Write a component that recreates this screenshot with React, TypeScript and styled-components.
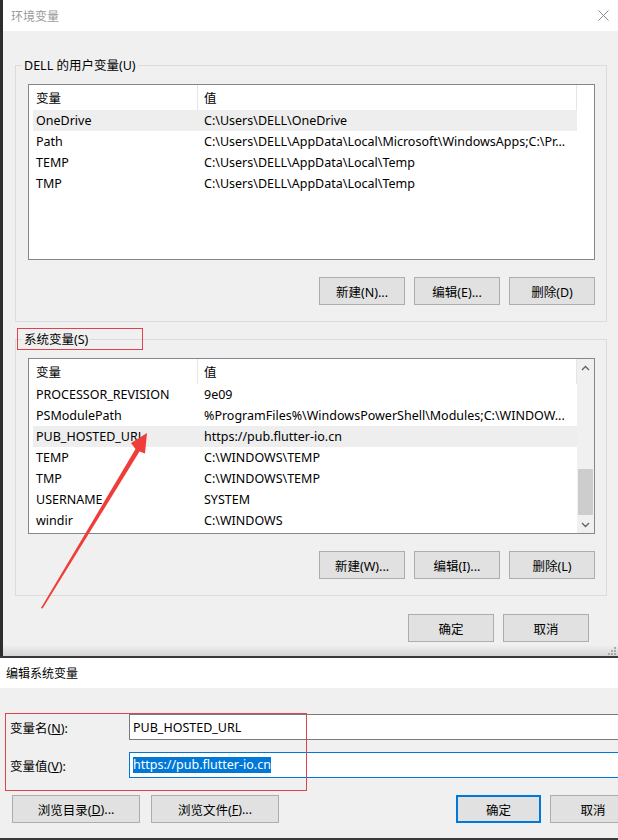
import React from "react";
import styled, { createGlobalStyle } from "styled-components";

const FONT = `"Noto Sans", "Noto Sans CJK SC", sans-serif`;

const GlobalStyle = createGlobalStyle`
  html, body { margin: 0; padding: 0; background: #2b2b2b; }
  body { font-family: ${FONT}; }
  * { box-sizing: border-box; }
`;

const Root = styled.div`
  position: relative;
  width: 618px;
  height: 840px;
  overflow: hidden;
  display: flex;
  flex-direction: column;
  font-family: ${FONT};
  color: #000;
`;

const EnvWindow = styled.div`
  display: flex;
  height: 656px;
  flex-shrink: 0;
`;

const LeftEdge = styled.div`
  width: 3px;
  background: #2e2e2e;
`;

const WindowMain = styled.div`
  flex: 1;
  min-width: 0;
  display: flex;
  flex-direction: column;
`;

const TitleBar = styled.div<{ $active?: boolean; $h: number; $pad: number }>`
  height: ${(p) => p.$h}px;
  flex-shrink: 0;
  background: #fff;
  display: flex;
  align-items: center;
  justify-content: space-between;
  padding: 0 9px 0 ${(p) => p.$pad}px;
  font-size: 12px;
  color: ${(p) => (p.$active ? "#000" : "#9a9a9a")};
`;

const EnvBody = styled.div`
  flex: 1;
  background: #f0f0f0;
  display: flex;
  flex-direction: column;
  padding: 34px 11px 0 12px;
`;

const GroupBox = styled.div<{ $mt: number }>`
  margin-top: ${(p) => p.$mt}px;
  border: 1px solid #dcdcdc;
  padding: 0 11px 16px 12px;
  display: flex;
  flex-direction: column;
`;

const GroupTitle = styled.div`
  align-self: flex-start;
  margin: -9px 0 0 -6px;
  padding: 0 2px;
  height: 18px;
  line-height: 18px;
  background: #f0f0f0;
  font-size: 12.5px;
  white-space: nowrap;
`;

const ListView = styled.div`
  margin-top: 9px;
  height: 176px;
  border: 1px solid #828790;
  background: #fff;
  display: flex;
`;

const ListContent = styled.div`
  flex: 1;
  min-width: 0;
  display: flex;
  flex-direction: column;
`;

const Header = styled.div`
  height: 25px;
  display: flex;
  flex-shrink: 0;
`;

const HeaderCell = styled.div<{ $w?: number; $pl: number }>`
  ${(p) => (p.$w ? `width: ${p.$w}px; flex-shrink: 0;` : "flex: 1;")}
  padding-left: ${(p) => p.$pl}px;
  border-right: 1px solid #e5e5e5;
  display: flex;
  align-items: center;
  font-size: 12.5px;
  padding-bottom: 1px;
`;

const Row = styled.div<{ $selected?: boolean }>`
  margin-left: 4px;
  height: 21px;
  flex-shrink: 0;
  display: flex;
  align-items: center;
  background: ${(p) => (p.$selected ? "#eeeeee" : "transparent")};
  font-size: 12.5px;
  white-space: nowrap;
  padding-bottom: 1px;
`;

const Cell = styled.div<{ $w?: number; $pl: number }>`
  ${(p) => (p.$w ? `width: ${p.$w}px; flex-shrink: 0;` : "flex: 1; min-width: 0;")}
  padding-left: ${(p) => p.$pl}px;
  overflow: hidden;
`;

const BlankStrip = styled.div`
  width: 17px;
  flex-shrink: 0;
`;

const ScrollBar = styled.div`
  width: 17px;
  flex-shrink: 0;
  background: #f0f0f0;
  display: flex;
  flex-direction: column;
`;

const ScrollArrow = styled.div`
  height: 17px;
  flex-shrink: 0;
  display: flex;
  align-items: center;
  justify-content: center;
`;

const ScrollTrack = styled.div`
  flex: 1;
  display: flex;
  flex-direction: column;
  align-items: center;
`;

const ScrollThumb = styled.div<{ $top: number; $h: number }>`
  margin-top: ${(p) => p.$top}px;
  width: 15px;
  height: ${(p) => p.$h}px;
  background: #cdcdcd;
`;

const ButtonRow = styled.div<{ $mt: number; $pr?: number }>`
  margin-top: ${(p) => p.$mt}px;
  padding-right: ${(p) => p.$pr ?? 0}px;
  display: flex;
  justify-content: flex-end;
  gap: 9px;
`;

const WinButton = styled.div<{ $w: number; $default?: boolean }>`
  width: ${(p) => p.$w}px;
  height: 28px;
  flex-shrink: 0;
  background: #e1e1e1;
  border: ${(p) => (p.$default ? "2px solid #0078d7" : "1px solid #adadad")};
  display: flex;
  align-items: center;
  justify-content: center;
  font-size: 12.5px;
  color: #000;
  white-space: nowrap;
`;

const WindowFooter = styled.div`
  flex: 1;
  margin: 0 -11px 0 -12px;
  background: linear-gradient(#f0f0f0 0%, #f0f0f0 20%, #d6d6d6 100%);
  display: flex;
  justify-content: flex-end;
  align-items: flex-end;
  padding: 0 2px 1px 0;
`;

const Separator = styled.div`
  height: 2px;
  flex-shrink: 0;
  background: #3a3a3a;
`;

const EditDialog = styled.div`
  flex: 1;
  display: flex;
  flex-direction: column;
  border-bottom: 2px solid #3a3a3a;
`;

const DialogBody = styled.div`
  flex: 1;
  background: #f0f0f0;
  overflow: hidden;
`;

const DialogInner = styled.div`
  width: 648px;
  padding: 26px 12px 0 10px;
  display: flex;
  flex-direction: column;
`;

const FieldRow = styled.div<{ $mt: number }>`
  margin-top: ${(p) => p.$mt}px;
  display: flex;
  align-items: center;
`;

const FieldLabel = styled.div`
  width: 119px;
  flex-shrink: 0;
  font-size: 12.5px;
`;

const FieldInput = styled.div<{ $focused?: boolean }>`
  flex: 1;
  height: 26px;
  background: #fff;
  border: 1px solid ${(p) => (p.$focused ? "#0078d7" : "#7a7a7a")};
  padding-left: 3px;
  display: flex;
  align-items: center;
  font-size: 12.5px;
  white-space: nowrap;
`;

const Selected = styled.span`
  background: #0078d7;
  color: #fff;
  line-height: 16px;
`;

const DialogButtons = styled.div`
  margin-top: 17px;
  padding-left: 2px;
  display: flex;
  justify-content: space-between;
`;

const ButtonGroup = styled.div<{ $gap: number }>`
  display: flex;
  gap: ${(p) => p.$gap}px;
`;

const RedFrame = styled.div<{ $x: number; $y: number; $w: number; $h: number }>`
  position: absolute;
  left: ${(p) => p.$x}px;
  top: ${(p) => p.$y}px;
  width: ${(p) => p.$w}px;
  height: ${(p) => p.$h}px;
  border: 1px solid #e0444a;
  pointer-events: none;
`;

const ArrowLayer = styled.svg`
  position: absolute;
  left: 0;
  top: 0;
  pointer-events: none;
`;

const CloseIcon = () => (
  <svg width="11" height="11" viewBox="0 0 11 11">
    <path d="M0.5 0.5 L10.5 10.5 M10.5 0.5 L0.5 10.5" stroke="#8a8a8a" strokeWidth="1" fill="none" />
  </svg>
);

const Chevron = ({ up }: { up?: boolean }) => (
  <svg width="9" height="6" viewBox="0 0 9 6">
    <polyline
      points={up ? "1,5 4.5,1.5 8,5" : "1,1 4.5,4.5 8,1"}
      stroke="#606060"
      strokeWidth="1.3"
      fill="none"
    />
  </svg>
);

const Grip = () => (
  <svg width="8" height="8" viewBox="0 0 8 8">
    {[
      [6, 0],
      [6, 3],
      [3, 3],
      [6, 6],
      [3, 6],
      [0, 6],
    ].map(([x, y], i) => (
      <rect key={i} x={x} y={y} width="2" height="2" fill="#a8a8a8" />
    ))}
  </svg>
);

type Var = { name: string; value: string; selected?: boolean };

const userVars: Var[] = [
  { name: "OneDrive", value: "C:\\Users\\DELL\\OneDrive", selected: true },
  { name: "Path", value: "C:\\Users\\DELL\\AppData\\Local\\Microsoft\\WindowsApps;C:\\Pr..." },
  { name: "TEMP", value: "C:\\Users\\DELL\\AppData\\Local\\Temp" },
  { name: "TMP", value: "C:\\Users\\DELL\\AppData\\Local\\Temp" },
];

const sysVars: Var[] = [
  { name: "PROCESSOR_REVISION", value: "9e09" },
  { name: "PSModulePath", value: "%ProgramFiles%\\WindowsPowerShell\\Modules;C:\\WINDOW..." },
  { name: "PUB_HOSTED_URL", value: "https://pub.flutter-io.cn", selected: true },
  { name: "TEMP", value: "C:\\WINDOWS\\TEMP" },
  { name: "TMP", value: "C:\\WINDOWS\\TEMP" },
  { name: "USERNAME", value: "SYSTEM" },
  { name: "windir", value: "C:\\WINDOWS" },
];

const VarList = ({ rows, scroll }: { rows: Var[]; scroll?: boolean }) => (
  <ListView>
    <ListContent>
      <Header>
        <HeaderCell $w={169} $pl={7}>变量</HeaderCell>
        <HeaderCell $pl={6}>值</HeaderCell>
      </Header>
      {rows.map((r, i) => (
        <Row key={i} $selected={r.selected}>
          <Cell $w={164} $pl={3}>{r.name}</Cell>
          <Cell $pl={7}>{r.value}</Cell>
        </Row>
      ))}
    </ListContent>
    {scroll ? (
      <ScrollBar>
        <ScrollArrow>
          <Chevron up />
        </ScrollArrow>
        <ScrollTrack>
          <ScrollThumb $top={93} $h={46} />
        </ScrollTrack>
        <ScrollArrow>
          <Chevron />
        </ScrollArrow>
      </ScrollBar>
    ) : (
      <BlankStrip />
    )}
  </ListView>
);

export default function App() {
  return (
    <Root>
      <GlobalStyle />
      <EnvWindow>
        <LeftEdge />
        <WindowMain>
          <TitleBar $h={31} $pad={8}>
            <span>环境变量</span>
            <CloseIcon />
          </TitleBar>
          <EnvBody>
            <GroupBox $mt={0}>
              <GroupTitle>DELL 的用户变量(U)</GroupTitle>
              <VarList rows={userVars} />
              <ButtonRow $mt={17}>
                <WinButton $w={86}>新建(N)...</WinButton>
                <WinButton $w={86}>编辑(E)...</WinButton>
                <WinButton $w={86}>删除(D)</WinButton>
              </ButtonRow>
            </GroupBox>
            <GroupBox $mt={17}>
              <GroupTitle>系统变量(S)</GroupTitle>
              <VarList rows={sysVars} scroll />
              <ButtonRow $mt={17}>
                <WinButton $w={86}>新建(W)...</WinButton>
                <WinButton $w={86}>编辑(I)...</WinButton>
                <WinButton $w={86}>删除(L)</WinButton>
              </ButtonRow>
            </GroupBox>
            <ButtonRow $mt={18} $pr={18}>
              <WinButton $w={86}>确定</WinButton>
              <WinButton $w={86}>取消</WinButton>
            </ButtonRow>
            <WindowFooter>
              <Grip />
            </WindowFooter>
          </EnvBody>
        </WindowMain>
      </EnvWindow>
      <Separator />
      <EditDialog>
        <TitleBar $h={30} $pad={6} $active>
          <span>编辑系统变量</span>
        </TitleBar>
        <DialogBody>
          <DialogInner>
            <FieldRow $mt={0}>
              <FieldLabel>
                变量名(<u>N</u>):
              </FieldLabel>
              <FieldInput>PUB_HOSTED_URL</FieldInput>
            </FieldRow>
            <FieldRow $mt={12}>
              <FieldLabel>
                变量值(<u>V</u>):
              </FieldLabel>
              <FieldInput $focused>
                <Selected>https://pub.flutter-io.cn</Selected>
              </FieldInput>
            </FieldRow>
            <DialogButtons>
              <ButtonGroup $gap={11}>
                <WinButton $w={128}>
                  浏览目录(<u>D</u>)...
                </WinButton>
                <WinButton $w={128}>
                  浏览文件(<u>F</u>)...
                </WinButton>
              </ButtonGroup>
              <ButtonGroup $gap={9}>
                <WinButton $w={85} $default>
                  确定
                </WinButton>
                <WinButton $w={86}>取消</WinButton>
              </ButtonGroup>
            </DialogButtons>
          </DialogInner>
        </DialogBody>
      </EditDialog>

      <RedFrame $x={17} $y={328} $w={126} $h={22} />
      <RedFrame $x={5} $y={713} $w={302} $h={78} />
      <ArrowLayer width="618" height="840" viewBox="0 0 618 840">
        <polygon
          points="41,608 135.5,449 131,443 147,433 145,453.5 139.5,451.5 42.6,608.6"
          fill="#ef3e3a"
        />
      </ArrowLayer>
    </Root>
  );
}
